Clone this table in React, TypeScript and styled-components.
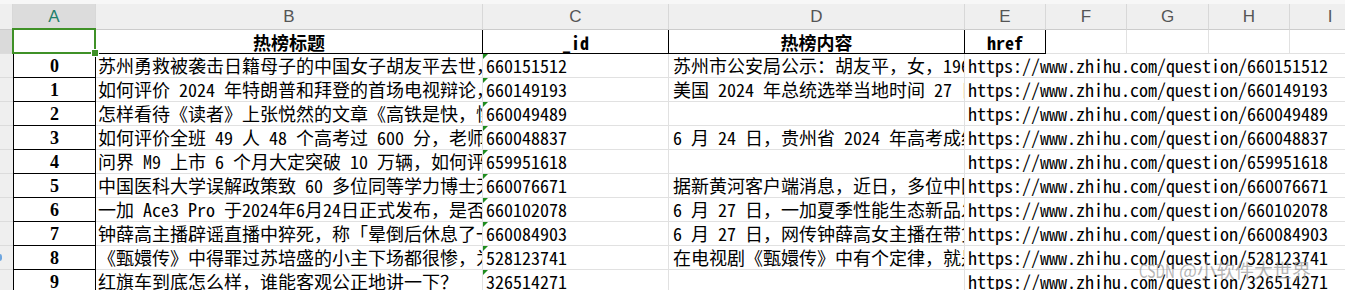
import React from "react";
import styled, { createGlobalStyle } from "styled-components";

const GlobalStyle = createGlobalStyle`
  html, body { margin: 0; padding: 0; background: #ffffff; }
  body { width: 1345px; height: 290px; overflow: hidden; }
  * { box-sizing: border-box; }
`;

const CELL_FONT = `"Noto Sans Mono CJK SC", "Noto Sans CJK SC", "Liberation Mono", monospace`;
const COLS = "13px 83px 387px 186px 296px 81px 81px 82px 81px 81px";
const GRID = "#e1e1e1";

const Sheet = styled.div`
  position: relative;
  width: 1345px;
  height: 290px;
  overflow: hidden;
  background: #ffffff;
`;

const TopStrip = styled.div`
  height: 4px;
  background: #f7f7f7;
`;

const Grid = styled.div`
  display: grid;
  grid-template-columns: ${COLS};
  grid-template-rows: 26px;
  grid-auto-rows: 24px;
`;

const ColHead = styled.div<{ $selected?: boolean }>`
  display: flex;
  align-items: center;
  justify-content: center;
  background: ${(p) => (p.$selected ? "#dcdcdc" : "#efefef")};
  border-right: 1px solid #d8d8d8;
  border-bottom: 1px solid #cccccc;
  color: ${(p) => (p.$selected ? "#1f806b" : "#555555")};
  font-family: "Liberation Sans", Arial, sans-serif;
  font-size: 17px;
  padding-top: 1px;
`;

const Gutter = styled.div<{ $selected?: boolean }>`
  background: ${(p) => (p.$selected ? "#dadada" : "#efefef")};
  border-bottom: 1px solid #dcdcdc;
  position: relative;
`;

const Marker = styled.span`
  position: absolute;
  left: -3px;
  top: 8px;
  width: 5px;
  height: 7px;
  border-radius: 3px;
  background: #6ea6e0;
`;

const IndexCell = styled.div`
  display: flex;
  align-items: center;
  justify-content: center;
  border-left: 1px solid #000;
  border-right: 1px solid #000;
  border-bottom: 1px solid #000;
  font-family: "Liberation Serif", "Times New Roman", serif;
  font-weight: 700;
  font-size: 18px;
  color: #000;
  padding-top: 1px;
`;

const SelectedCell = styled.div`
  position: relative;
  border-left: 1px solid #000;
  border-right: 1px solid #000;
  border-bottom: 1px solid #000;
  &::after {
    content: "";
    position: absolute;
    left: -2px;
    top: -2px;
    right: -1px;
    bottom: -1px;
    border: 2.5px solid #3f9127;
    z-index: 2;
  }
  &::before {
    content: "";
    position: absolute;
    right: -4px;
    bottom: -4px;
    width: 6px;
    height: 6px;
    background: #3f9127;
    border: 1px solid #ffffff;
    z-index: 3;
  }
`;

const HeadCell = styled.div`
  display: flex;
  align-items: center;
  justify-content: center;
  border-right: 1px solid #000;
  border-bottom: 1px solid #000;
  font-family: ${CELL_FONT};
  font-weight: 700;
  font-size: 18px;
  color: #000;
  white-space: nowrap;
  overflow: hidden;
`;

const DataCell = styled.div<{ $pad?: number; $flag?: boolean; $span?: number }>`
  position: relative;
  display: flex;
  align-items: center;
  padding-left: ${(p) => p.$pad ?? 2}px;
  border-right: ${(p) => (p.$span ? "none" : `1px solid ${GRID}`)};
  border-bottom: 1px solid ${GRID};
  grid-column: ${(p) => (p.$span ? `span ${p.$span}` : "auto")};
  font-family: ${CELL_FONT};
  font-size: 18px;
  color: #000;
  white-space: pre;
  overflow: hidden;
  line-height: 23px;
  &::before {
    content: "";
    display: ${(p) => (p.$flag ? "block" : "none")};
    position: absolute;
    left: 0;
    top: 0;
    width: 0;
    height: 0;
    border-top: 5px solid #1e8c1e;
    border-right: 5px solid transparent;
  }
`;

const Watermark = styled.div`
  position: absolute;
  left: 1139px;
  top: 256px;
  font-family: "Noto Sans CJK SC", "Liberation Sans", sans-serif;
  font-size: 19px;
  color: rgba(150, 150, 150, 0.7);
  white-space: nowrap;
  pointer-events: none;
`;

const Narrow = styled.span`
  display: inline-block;
  transform: scaleX(0.72);
  transform-origin: left center;
  margin-right: -14px;
`;

type Row = { b: string; c: string; d: string };

const rows: Row[] = [
  { b: "苏州勇救被袭击日籍母子的中国女子胡友平去世，如何看待她的见义勇为？", c: "660151512", d: "苏州市公安局公示：胡友平，女，1969年出生" },
  { b: "如何评价 2024 年特朗普和拜登的首场电视辩论，谁表现更好？", c: "660149193", d: "美国 2024 年总统选举当地时间 27 日举行首场辩论" },
  { b: "怎样看待《读者》上张悦然的文章《高铁是快，慢车是生活》？", c: "660049489", d: "" },
  { b: "如何评价全班 49 人 48 个高考过 600 分，老师称是常规操作？", c: "660048837", d: "6 月 24 日，贵州省 2024 年高考成绩公布" },
  { b: "问界 M9 上市 6 个月大定突破 10 万辆，如何评价？", c: "659951618", d: "" },
  { b: "中国医科大学误解政策致 60 多位同等学力博士无法毕业？", c: "660076671", d: "据新黄河客户端消息，近日，多位中国医科大学" },
  { b: "一加 Ace3 Pro 于2024年6月24日正式发布，是否值得购买？", c: "660102078", d: "6 月 27 日，一加夏季性能生态新品发布会" },
  { b: "钟薛高主播辟谣直播中猝死，称「晕倒后休息了一会儿」", c: "660084903", d: "6 月 27 日，网传钟薛高女主播在带货直播中" },
  { b: "《甄嬛传》中得罪过苏培盛的小主下场都很惨，为什么？", c: "528123741", d: "在电视剧《甄嬛传》中有个定律，就是得罪了" },
  { b: "红旗车到底怎么样，谁能客观公正地讲一下？", c: "326514271", d: "" },
];

const letters = ["A", "B", "C", "D", "E", "F", "G", "H", "I"];

export default function App() {
  return (
    <Sheet>
      <GlobalStyle />
      <TopStrip />
      <Grid>
        <ColHead />
        {letters.map((l) => (
          <ColHead key={l} $selected={l === "A"}>
            {l}
          </ColHead>
        ))}

        <Gutter $selected />
        <SelectedCell />
        <HeadCell>热榜标题</HeadCell>
        <HeadCell>_id</HeadCell>
        <HeadCell>热榜内容</HeadCell>
        <HeadCell>href</HeadCell>
        <DataCell />
        <DataCell />
        <DataCell />
        <DataCell />

        {rows.map((r, i) => (
          <React.Fragment key={i}>
            <Gutter>{i === 8 && <Marker />}</Gutter>
            <IndexCell>{i}</IndexCell>
            <DataCell $pad={2}>{r.b}</DataCell>
            <DataCell $pad={3} $flag>
              {r.c}
            </DataCell>
            <DataCell $pad={4}>{r.d}</DataCell>
            <DataCell $pad={3} $span={5}>
              {`https://www.zhihu.com/question/${r.c}`}
            </DataCell>
          </React.Fragment>
        ))}
      </Grid>
      <Watermark>
        <Narrow>CSDN</Narrow> @小软件大世界
      </Watermark>
    </Sheet>
  );
}
